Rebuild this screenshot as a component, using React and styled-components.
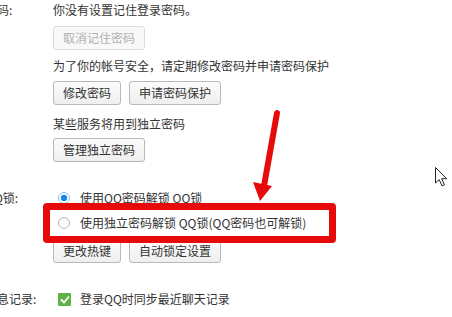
import React from 'react';
import styled, { createGlobalStyle } from 'styled-components';

const GlobalStyle = createGlobalStyle`
  html, body {
    margin: 0;
    padding: 0;
    background: #fff;
    overflow: hidden;
  }
  body {
    font-family: "Noto Sans CJK SC", "Microsoft YaHei", sans-serif;
    font-size: 12px;
    color: #333;
  }
`;

const Page = styled.div`
  position: relative;
  width: 452px;
  height: 317px;
  overflow: hidden;
`;

const Settings = styled.div`
  display: flex;
  flex-direction: column;
  margin-left: -15px;
`;

const Section = styled.div`
  display: grid;
  grid-template-columns: 68px 1fr;
  margin-top: ${(p) => p.$top || 0}px;
`;

const Label = styled.div`
  line-height: 20px;
  height: 20px;
  white-space: nowrap;
`;

const Content = styled.div`
  display: flex;
  flex-direction: column;
  align-items: flex-start;
`;

const Line = styled.div`
  display: flex;
  align-items: center;
  height: 20px;
  line-height: 20px;
  white-space: nowrap;
  margin-top: ${(p) => p.$top || 0}px;
`;

const ButtonRow = styled.div`
  display: flex;
  gap: 8px;
  margin-top: ${(p) => p.$top || 0}px;
`;

const Button = styled.button`
  height: 24px;
  padding: 0 9px;
  font-family: inherit;
  font-size: 12px;
  color: ${(p) => (p.disabled ? '#b0b0b0' : '#333')};
  background: ${(p) =>
    p.disabled ? '#f8f8f8' : 'linear-gradient(#fbfbfb, #efefef)'};
  border: 1px solid ${(p) => (p.disabled ? '#dcdcdc' : '#b9b9b9')};
  border-radius: 3px;
  line-height: 22px;
`;

const Radio = styled.span`
  box-sizing: border-box;
  width: 12px;
  height: 12px;
  margin: 0 10px 0 5px;
  border-radius: 50%;
  border: 1px solid ${(p) => (p.$checked ? '#8cc2ef' : '#b5b5b5')};
  background: ${(p) =>
    p.$checked ? 'radial-gradient(circle, #1e88e5 0 3px, #fff 3.6px)' : '#fff'};
`;

const Check = styled.span`
  display: flex;
  align-items: center;
  justify-content: center;
  width: 13px;
  height: 13px;
  margin: 0 9px 0 5px;
  background: #5fb245;
  border-radius: 1px;
`;

const Highlight = styled.div`
  position: absolute;
  left: 43px;
  top: 203px;
  width: 293px;
  height: 40px;
  box-sizing: border-box;
  border: 7px solid #e60a0a;
  border-radius: 4px;
`;

const Overlay = styled.svg`
  position: absolute;
  left: ${(p) => p.$x}px;
  top: ${(p) => p.$y}px;
`;

export default function App() {
  return (
    <Page>
      <GlobalStyle />
      <Settings>
        <Section>
          <Label>密码:</Label>
          <Content>
            <Line>你没有设置记住登录密码。</Line>
            <ButtonRow $top={6}>
              <Button disabled>取消记住密码</Button>
            </ButtonRow>
            <Line $top={6}>为了你的帐号安全，请定期修改密码并申请密码保护</Line>
            <ButtonRow $top={5}>
              <Button>修改密码</Button>
              <Button>申请密码保护</Button>
            </ButtonRow>
            <Line $top={9}>某些服务将用到独立密码</Line>
            <ButtonRow $top={4}>
              <Button>管理独立密码</Button>
            </ButtonRow>
          </Content>
        </Section>
        <Section $top={26}>
          <Label>QQ锁:</Label>
          <Content>
            <Line>
              <Radio $checked />
              使用QQ密码解锁 QQ锁
            </Line>
            <Line $top={5}>
              <Radio />
              使用独立密码解锁 QQ锁(QQ密码也可解锁)
            </Line>
            <ButtonRow $top={6}>
              <Button>更改热键</Button>
              <Button>自动锁定设置</Button>
            </ButtonRow>
          </Content>
        </Section>
        <Section $top={26}>
          <Label>消息记录:</Label>
          <Content>
            <Line>
              <Check>
                <svg width="10" height="9" viewBox="0 0 10 9">
                  <path d="M1 4.5 L4 7.5 L9 1.5" fill="none" stroke="#fff" strokeWidth="1.8" />
                </svg>
              </Check>
              登录QQ时同步最近聊天记录
            </Line>
          </Content>
        </Section>
      </Settings>

      <Highlight />
      <Overlay $x={248} $y={108} width="36" height="96" viewBox="0 0 36 96">
        <line x1="29" y1="5" x2="16" y2="78" stroke="#e60a0a" strokeWidth="6" strokeLinecap="round" />
        <polygon points="5,74 24,78 12,93" fill="#e60a0a" />
      </Overlay>
      <Overlay $x={434} $y={166} width="16" height="22" viewBox="0 0 16 22">
        <path
          d="M1.5 1.5 L1.5 17 L5.2 13.6 L8 19.8 L10.4 18.8 L7.7 12.7 L12.6 12.7 Z"
          fill="#fff"
          stroke="#222"
          strokeWidth="1"
          strokeLinejoin="round"
        />
      </Overlay>
    </Page>
  );
}
